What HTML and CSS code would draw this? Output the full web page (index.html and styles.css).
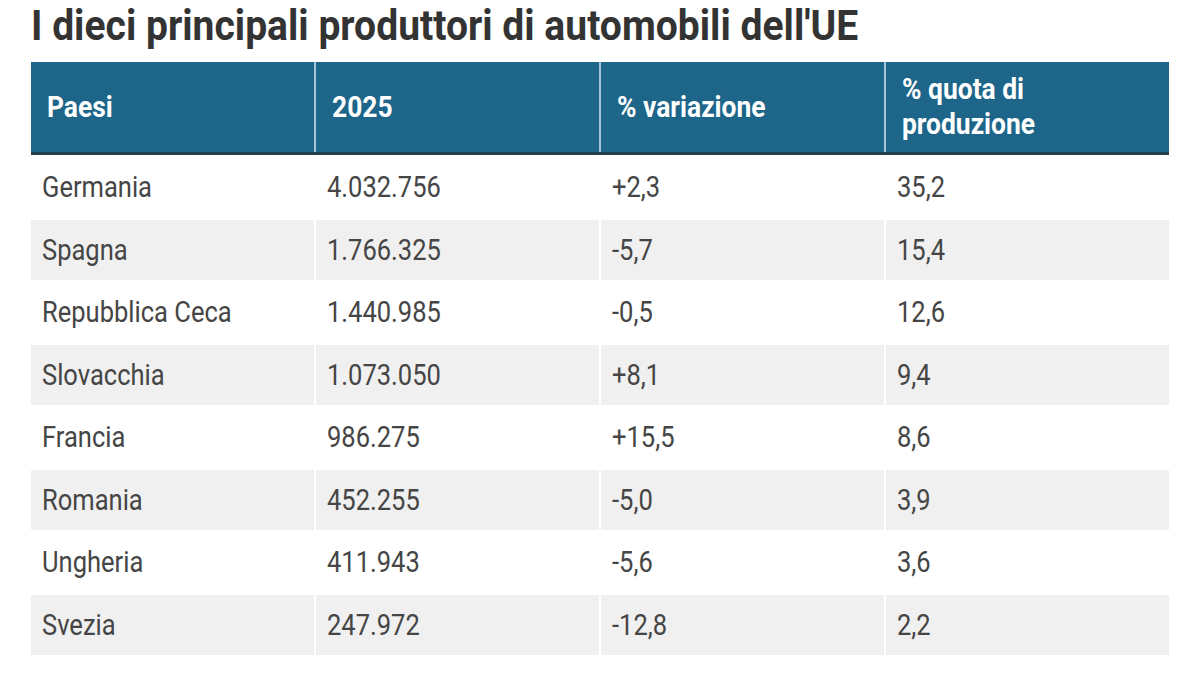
FILE: index.html
```html
<!DOCTYPE html>
<html lang="it">
<head>
<meta charset="utf-8">
<title>I dieci principali produttori di automobili dell'UE</title>
<link rel="stylesheet" href="styles.css">
</head>
<body>
<div class="page">
  <h1 class="title"><span class="cond">I dieci principali produttori di automobili dell'UE</span></h1>
  <div class="table">
    <div class="head">
      <div class="hcell"><span class="cond">Paesi</span></div>
      <div class="hcell"><span class="cond">2025</span></div>
      <div class="hcell"><span class="cond">% variazione</span></div>
      <div class="hcell"><span class="cond">% quota di<br>produzione</span></div>
    </div>
    <div class="body">
      <div class="row"><div class="cell"><span class="cond">Germania</span></div><div class="cell"><span class="cond">4.032.756</span></div><div class="cell"><span class="cond">+2,3</span></div><div class="cell"><span class="cond">35,2</span></div></div>
      <div class="row alt"><div class="cell"><span class="cond">Spagna</span></div><div class="cell"><span class="cond">1.766.325</span></div><div class="cell"><span class="cond">-5,7</span></div><div class="cell"><span class="cond">15,4</span></div></div>
      <div class="row"><div class="cell"><span class="cond">Repubblica Ceca</span></div><div class="cell"><span class="cond">1.440.985</span></div><div class="cell"><span class="cond">-0,5</span></div><div class="cell"><span class="cond">12,6</span></div></div>
      <div class="row alt"><div class="cell"><span class="cond">Slovacchia</span></div><div class="cell"><span class="cond">1.073.050</span></div><div class="cell"><span class="cond">+8,1</span></div><div class="cell"><span class="cond">9,4</span></div></div>
      <div class="row"><div class="cell"><span class="cond">Francia</span></div><div class="cell"><span class="cond">986.275</span></div><div class="cell"><span class="cond">+15,5</span></div><div class="cell"><span class="cond">8,6</span></div></div>
      <div class="row alt"><div class="cell"><span class="cond">Romania</span></div><div class="cell"><span class="cond">452.255</span></div><div class="cell"><span class="cond">-5,0</span></div><div class="cell"><span class="cond">3,9</span></div></div>
      <div class="row"><div class="cell"><span class="cond">Ungheria</span></div><div class="cell"><span class="cond">411.943</span></div><div class="cell"><span class="cond">-5,6</span></div><div class="cell"><span class="cond">3,6</span></div></div>
      <div class="row alt"><div class="cell"><span class="cond">Svezia</span></div><div class="cell"><span class="cond">247.972</span></div><div class="cell"><span class="cond">-12,8</span></div><div class="cell"><span class="cond">2,2</span></div></div>
    </div>
  </div>
</div>
</body>
</html>
```

FILE: styles.css
```css
html, body {
  margin: 0;
  padding: 0;
  background: #ffffff;
  overflow: hidden;
}
body {
  font-family: Roboto, "Liberation Sans", sans-serif;
  width: 1200px;
  height: 675px;
}
.page {
  padding: 0 31px;
}
.cond {
  display: inline-block;
  transform-origin: left center;
  white-space: nowrap;
}
.title {
  margin: 0;
  height: 62px;
  display: flex;
  align-items: flex-start;
  padding-top: 1px;
  box-sizing: border-box;
  font-size: 42px;
  line-height: 50px;
  font-weight: 700;
  color: #333333;
}
.title .cond {
  transform: scaleX(0.93);
}
.table {
  width: 1138px;
}
.head {
  display: grid;
  grid-template-columns: repeat(4, 1fr);
  column-gap: 2px;
  background: #a9c4d3;
  border-bottom: 3px solid #24414f;
  height: 93px;
  box-sizing: border-box;
}
.hcell {
  background: #1d6589;
  color: #ffffff;
  font-weight: 700;
  font-size: 29px;
  line-height: 35px;
  padding: 0 16px;
  display: flex;
  align-items: center;
}
.hcell .cond {
  transform: scaleX(0.91);
}
.body {
  display: flex;
  flex-direction: column;
  row-gap: 2px;
  padding-top: 2px;
}
.row {
  display: grid;
  grid-template-columns: repeat(4, 1fr);
  column-gap: 2px;
  height: 60.5px;
}
.cell {
  display: flex;
  align-items: center;
  padding: 0 11px;
  font-size: 29px;
  color: #454545;
}
.cell .cond {
  transform: scaleX(0.88);
}
.row.alt .cell {
  background: #f0f0f0;
}
```
